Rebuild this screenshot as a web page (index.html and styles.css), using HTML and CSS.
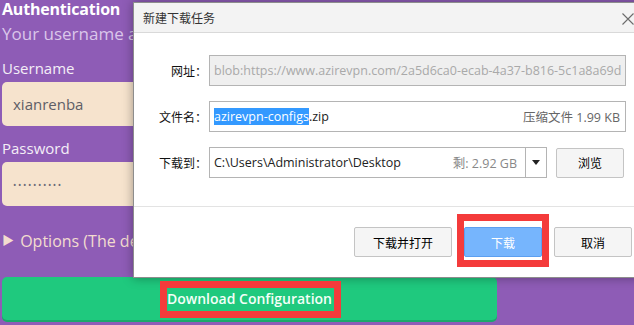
FILE: index.html
```html
<!DOCTYPE html>
<html lang="zh-CN">
<head>
    <meta charset="UTF-8">
    <meta name="viewport" content="width=device-width, initial-scale=1.0">
    <title>新建下载任务</title>
    <link rel="stylesheet" href="styles.css">
</head>
<body>

    <div class="page">
        <h1 class="title">Authentication</h1>
        <p class="subtitle">Your username and password</p>

        <div class="label">Username</div>
        <div class="field">xianrenba</div>

        <div class="label pw-label">Password</div>
        <div class="field dots">••••••••••</div>

        <div class="options"><span class="arrow">&#9654;</span> Options (The defaults are fine)</div>

        <button class="download-btn">Download Configuration</button>
    </div>

    <!-- Download dialog -->
    <div class="dialog">
        <div class="dialog-head">
            <span>新建下载任务</span>
            <svg class="close" width="12" height="12" viewBox="0 0 12 12">
                <path d="M0.5 0.5 L11.5 11.5 M11.5 0.5 L0.5 11.5" stroke="#6b6b6b" stroke-width="1.1" fill="none"/>
            </svg>
        </div>
        <div class="dialog-body">
            <div class="row">
                <div class="row-label">网址：</div>
                <div class="box box-url">blob:https://www.azirevpn.com/2a5d6ca0-ecab-4a37-b816-5c1a8a69d</div>
            </div>
            <div class="row">
                <div class="row-label">文件名：</div>
                <div class="box box-name">
                    <span><span class="selected">azirevpn-configs</span>.zip</span>
                    <span class="meta">压缩文件 1.99 KB</span>
                </div>
            </div>
            <div class="row">
                <div class="row-label">下载到：</div>
                <div class="box box-path">
                    <span class="path">C:\Users\Administrator\Desktop</span>
                    <span class="meta free">剩: 2.92 GB</span>
                    <span class="drop">
                        <svg width="8" height="5" viewBox="0 0 8 5"><path d="M0 0 H8 L4 5 Z" fill="#222"/></svg>
                    </span>
                </div>
                <button class="btn browse">浏览</button>
            </div>
        </div>
        <div class="dialog-foot">
            <button class="btn">下载并打开</button>
            <button class="btn btn-primary">下载</button>
            <button class="btn">取消</button>
        </div>
    </div>

    <!-- red highlight marks -->
    <div class="mark mark-config"></div>
    <div class="mark mark-download"></div>

</body>
</html>
```

FILE: styles.css
```css
body {
    margin: 0;
    width: 634px;
    height: 325px;
    overflow: hidden;
    position: relative;
    background-color: #8e5cb6;
    font-family: "Open Sans", "Noto Sans", sans-serif;
}

.page {
    width: 495px;
    padding-left: 2px;
}

.title {
    margin: 0;
    font-size: 16px;
    line-height: 18px;
    font-weight: 700;
    letter-spacing: -0.2px;
    color: #ffffff;
    white-space: nowrap;
}

.subtitle {
    margin: 4px 0 0;
    font-size: 17px;
    line-height: 24px;
    color: #dac6ea;
    white-space: nowrap;
}

.label {
    margin-top: 12px;
    font-size: 15px;
    line-height: 20px;
    color: #f4eef6;
}

.pw-label {
    margin-top: 12px;
}

.field {
    margin-top: 4px;
    height: 44px;
    box-sizing: border-box;
    padding-left: 11px;
    display: flex;
    align-items: center;
    background-color: #f6e3cd;
    border-radius: 5px;
    font-size: 15px;
    color: #5e5e66;
}

.dots {
    font-size: 9px;
    letter-spacing: 1.6px;
    color: #6a6a78;
}

.options {
    margin-top: 23px;
    font-size: 16px;
    line-height: 24px;
    color: #f3dccf;
    white-space: nowrap;
}

.arrow {
    font-size: 12px;
    vertical-align: 2px;
    margin-right: 2px;
}

.download-btn {
    display: block;
    margin-top: 24px;
    width: 495px;
    height: 43px;
    border: none;
    border-radius: 5px;
    background-color: #1fc97e;
    box-shadow: 0 2px 0 #1aa96a;
    color: #f4fff8;
    font-family: "Open Sans", "Noto Sans", sans-serif;
    font-size: 14px;
    font-weight: 600;
}

/* dialog */
.dialog {
    position: absolute;
    left: 133px;
    top: 2px;
    width: 510px;
    border: 1px solid #8d8d8d;
    background-color: #ffffff;
    box-shadow: 0 0 10px rgba(0, 0, 0, 0.35);
    font-family: "Open Sans", "Noto Sans CJK SC", sans-serif;
    font-size: 12px;
    color: #222;
}

.dialog-head {
    height: 29px;
    display: flex;
    align-items: center;
    justify-content: space-between;
    padding: 0 10px 0 9px;
    background-color: #f3f3f3;
    border-bottom: 1px solid #d9d9d9;
    color: #333;
    font-family: "Noto Sans CJK SC", sans-serif;
}

.close {
    margin-top: 2px;
}

.dialog-body {
    padding: 22px 0 28px;
}

.row {
    display: flex;
    align-items: center;
    margin-top: 15px;
}

.row:first-child {
    margin-top: 0;
}

.row-label {
    width: 73px;
    padding-right: 2px;
    text-align: right;
    font-family: "Noto Sans CJK SC", sans-serif;
    color: #111;
}

.box {
    width: 417px;
    height: 31px;
    box-sizing: border-box;
    border: 1px solid #b4b4b4;
    display: flex;
    align-items: center;
    justify-content: space-between;
    padding: 0 5px 0 4px;
    white-space: nowrap;
    overflow: hidden;
    font-size: 12.5px;
}

.box-url {
    background-color: #efefef;
    color: #a9a9a9;
}

.selected {
    background-color: #3399ff;
    color: #ffffff;
}

.meta {
    color: #666;
    font-family: "Open Sans", "Noto Sans CJK SC", sans-serif;
}

.box-path {
    width: 338px;
    padding-right: 0;
}

.path {
    flex: 1;
}

.free {
    color: #888;
    margin-right: 8px;
}

.drop {
    width: 20px;
    height: 29px;
    border-left: 1px solid #b4b4b4;
    display: flex;
    align-items: center;
    justify-content: center;
}

.btn {
    height: 30px;
    padding: 0;
    background-color: #f5f5f5;
    border: 1px solid #c4c4c4;
    border-radius: 2px;
    font-family: "Noto Sans CJK SC", sans-serif;
    font-size: 12px;
    color: #000;
    width: 78px;
}

.browse {
    margin-left: 9px;
    width: 68px;
}

.dialog-foot {
    border-top: 1px solid #e3e3e3;
    padding: 20px 12px 20px 0;
    display: flex;
    justify-content: flex-end;
    gap: 12px;
}

.dialog-foot .btn:first-child {
    width: 98px;
}

.btn-primary {
    background-color: #76b5fd;
    border-color: #5c9ff0;
    color: #ffffff;
}

/* highlight marks */
.mark {
    position: absolute;
    border: 7px solid #f43b3b;
    box-sizing: border-box;
}

.mark-config {
    left: 160px;
    top: 281px;
    width: 181px;
    height: 37px;
}

.mark-download {
    left: 457px;
    top: 214px;
    width: 92px;
    height: 53px;
}
```
